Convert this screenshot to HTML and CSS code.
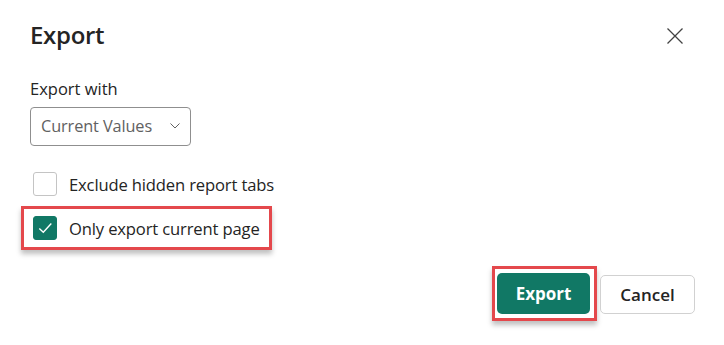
FILE: index.html
```html
<!DOCTYPE html>
<html>
<head>
<meta charset="utf-8">
<link rel="stylesheet" href="styles.css">
</head>
<body>
<div class="dialog">
  <div class="header">
    <h1 class="title">Export</h1>
    <button class="close" aria-label="Close">
      <svg width="16" height="16" viewBox="0 0 16 16"><path d="M0.5 0.5 L15.5 15.5 M15.5 0.5 L0.5 15.5" stroke="#424242" stroke-width="1.3" fill="none"/></svg>
    </button>
  </div>
  <div class="field">
    <label class="label">Export with</label>
    <div class="dropdown">
      <span class="dd-text">Current Values</span>
      <svg class="chev" width="10" height="6" viewBox="0 0 10 6"><path d="M0.5 0.5 L5 5 L9.5 0.5" stroke="#616161" stroke-width="1" fill="none"/></svg>
    </div>
  </div>
  <div class="checks">
    <div class="check-row">
      <span class="box"></span>
      <span class="check-label">Exclude hidden report tabs</span>
    </div>
    <div class="highlight row-hl">
      <div class="check-row">
        <span class="box checked">
          <svg width="22" height="22" viewBox="0 0 22 22"><path d="M5.3 11.5 L9.3 15.3 L17.3 6.5" stroke="#fff" stroke-width="1.4" fill="none"/></svg>
        </span>
        <span class="check-label">Only export current page</span>
      </div>
    </div>
  </div>
  <div class="footer">
    <div class="highlight btn-hl">
      <button class="btn primary">Export</button>
    </div>
    <button class="btn secondary">Cancel</button>
  </div>
</div>
</body>
</html>
```
FILE: styles.css
```css
* { box-sizing: border-box; }
html, body { margin: 0; padding: 0; background: #fff; }
body { font-family: "Open Sans", "Noto Sans", sans-serif; color: #242424; }
.dialog { width: 724px; height: 345px; padding: 19px 29px 0 30px; display: flex; flex-direction: column; }
.header { display: flex; justify-content: space-between; align-items: flex-start; }
.title { margin: 0; font-size: 24px; line-height: 32px; font-weight: 600; letter-spacing: -0.3px; }
.close { border: 0; background: none; padding: 0; margin-top: 9px; margin-right: 12px; width: 16px; height: 16px; display: flex; }
.field { margin-top: 27px; display: flex; flex-direction: column; }
.label { font-size: 16.5px; line-height: 22px; color: #242424; }
.dropdown { margin-top: 7px; width: 161px; height: 39px; border: 1px solid #8f8f8f; border-radius: 4px; display: flex; align-items: center; justify-content: space-between; padding: 0 10px 2px 10px; }
.dd-text { font-size: 16.3px; color: #616161; letter-spacing: -0.1px; }
.checks { margin-top: 26px; display: flex; flex-direction: column; margin-left: 3px; }
.check-row { display: flex; align-items: center; gap: 12px; height: 24px; }
.box { width: 24px; height: 24px; border: 1px solid #c4c4c4; border-radius: 3px; display: flex; flex: none; background: #fff; }
.box.checked { background: #117865; border-color: #117865; }
.check-label { font-size: 16.6px; color: #242424; letter-spacing: -0.15px; }
.highlight { border: 3px solid #e4484c; box-shadow: 0 4px 5px rgba(0,0,0,0.25); }
.row-hl { margin: 10px 0 0 -12px; width: 251px; padding: 7px 9px; }
.footer { margin-top: 16px; display: flex; justify-content: flex-end; align-items: center; gap: 3px; }
.btn-hl { padding: 4px 4px 4px 2px; }
.btn { font-family: "Open Sans", "Noto Sans", sans-serif; font-size: 17px; border-radius: 5px; height: 41px; cursor: pointer; }
.primary { width: 93px; background: #117865; color: #fff; border: 0; font-weight: 700; }
.secondary { width: 95px; height: 39px; background: #fff; color: #242424; border: 1px solid #d1d1d1; font-weight: 600; margin-top: 1px; }
```
